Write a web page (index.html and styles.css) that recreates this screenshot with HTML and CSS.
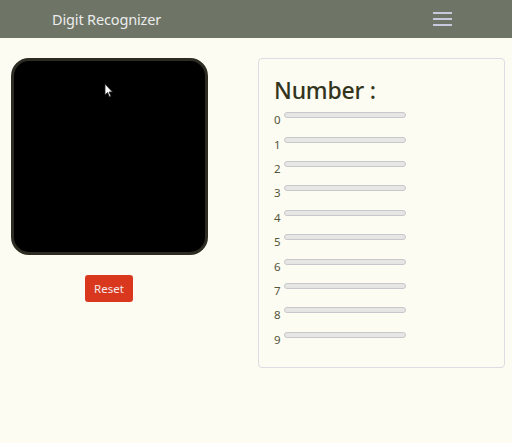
FILE: index.html
```html
<!DOCTYPE html>
<html>
<head>
<meta charset="utf-8">
<link rel="stylesheet" href="styles.css">
</head>
<body>
<nav class="navbar">
  <span class="brand">Digit Recognizer</span>
  <span class="toggler"><span></span><span></span><span></span></span>
</nav>
<main class="main">
  <section class="left">
    <div class="canvas">
      <svg class="cursor" width="10" height="15" viewBox="0 0 10 15"><path d="M1 1 L1 12 L3.5 9.5 L5.5 14 L7 13.3 L5 9 L8.5 9 Z" fill="#fff" stroke="#222" stroke-width="0.8"/></svg>
    </div>
    <button class="reset">Reset</button>
  </section>
  <section class="card">
    <h1 class="title">Number :</h1>
    <ul class="rows">
      <li class="row"><span class="lbl">0</span><span class="bar"></span></li>
      <li class="row"><span class="lbl">1</span><span class="bar"></span></li>
      <li class="row"><span class="lbl">2</span><span class="bar"></span></li>
      <li class="row"><span class="lbl">3</span><span class="bar"></span></li>
      <li class="row"><span class="lbl">4</span><span class="bar"></span></li>
      <li class="row"><span class="lbl">5</span><span class="bar"></span></li>
      <li class="row"><span class="lbl">6</span><span class="bar"></span></li>
      <li class="row"><span class="lbl">7</span><span class="bar"></span></li>
      <li class="row"><span class="lbl">8</span><span class="bar"></span></li>
      <li class="row"><span class="lbl">9</span><span class="bar"></span></li>
    </ul>
  </section>
</main>
</body>
</html>
```
FILE: styles.css
```css
* { box-sizing: border-box; }
html, body { margin: 0; padding: 0; }
body {
  background: #fcfcf2;
  font-family: "Noto Sans", "Open Sans", sans-serif;
  color: #33341f;
  width: 512px;
  height: 443px;
  overflow: hidden;
}
.navbar {
  height: 38px;
  background: #6e7466;
  display: flex;
  align-items: center;
  justify-content: space-between;
  padding: 0 60px 0 52px;
}
.brand {
  color: #ececec;
  font-size: 14.5px;
  line-height: 20px;
  letter-spacing: -0.15px;
}
.toggler {
  width: 19px;
  display: flex;
  flex-direction: column;
  gap: 4.5px;
}
.toggler span {
  display: block;
  height: 1.5px;
  background: #c9c9dd;
}
.main {
  display: flex;
  padding: 20px 7px 0 11px;
}
.left {
  width: 247px;
  display: flex;
  flex-direction: column;
  align-items: flex-start;
}
.canvas {
  position: relative;
  width: 197px;
  height: 197px;
  background: #000;
  border: 3px solid #2c2c22;
  border-radius: 18px;
}
.cursor {
  position: absolute;
  left: 90px;
  top: 22px;
}
.reset {
  margin: 20px 0 0 74px;
  width: 48px;
  height: 27px;
  border: none;
  border-radius: 3px;
  background: #d9381f;
  color: #f5e8e8;
  font-family: "Noto Sans", "Open Sans", sans-serif;
  font-size: 11.5px;
  padding: 0;
}
.card {
  width: 247px;
  height: 310px;
  border: 1px solid #dcdce2;
  border-radius: 4px;
  padding: 16px 15px;
}
.title {
  margin: 0;
  font-size: 23px;
  font-weight: 500;
  line-height: 30px;
  letter-spacing: -0.2px;
  color: #33341c;
}
.rows {
  list-style: none;
  margin: 0;
  padding: 0;
}
.row {
  display: flex;
  align-items: center;
  height: 24.4px;
}
.lbl {
  font-size: 11.5px;
  color: #55553a;
  width: 10px;
  margin-top: 5px;
}
.bar {
  width: 122px;
  height: 6px;
  border: 1px solid #c8c8cc;
  border-radius: 3px;
  background: #e6e6e4;
  margin-top: -4px;
}
```
